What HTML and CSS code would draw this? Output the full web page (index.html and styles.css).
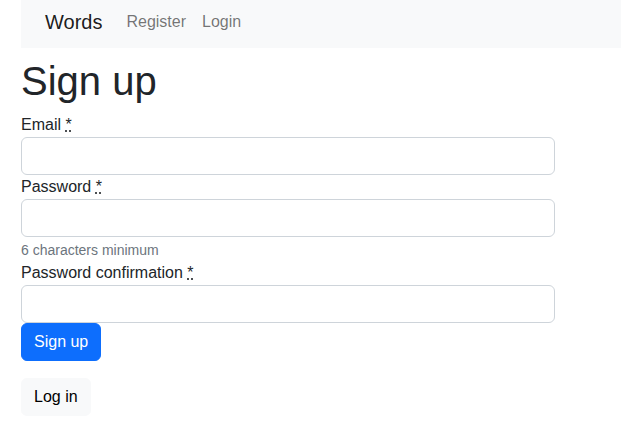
FILE: index.html
```html
<!DOCTYPE html>
<html lang="en">
<head>
<meta charset="utf-8">
<title>Words</title>
<link rel="stylesheet" href="styles.css">
</head>
<body>
<div class="page">
  <nav class="navbar">
    <a class="brand" href="#">Words</a>
    <a class="nav-link" href="#">Register</a>
    <a class="nav-link" href="#">Login</a>
  </nav>
  <h1 class="title">Sign up</h1>
  <form class="form">
    <div class="field">
      <label class="label">Email <abbr class="req" title="required">*</abbr></label>
      <input class="input" type="email">
    </div>
    <div class="field">
      <label class="label">Password <abbr class="req" title="required">*</abbr></label>
      <input class="input" type="password">
      <div class="hint">6 characters minimum</div>
    </div>
    <div class="field">
      <label class="label">Password confirmation <abbr class="req" title="required">*</abbr></label>
      <input class="input" type="password">
    </div>
    <div class="actions">
      <button class="btn btn-primary" type="button">Sign up</button>
    </div>
  </form>
  <div class="links">
    <a class="btn btn-light" href="#">Log in</a>
  </div>
</div>
</body>
</html>
```

FILE: styles.css
```css
* { box-sizing: border-box; }
html, body { margin: 0; padding: 0; }
body {
  font-family: "Liberation Sans", Arial, sans-serif;
  font-size: 16px;
  line-height: 1.5;
  color: #212529;
  background: #fff;
  overflow: hidden;
}
.page {
  padding-left: 21px;
}
.navbar {
  height: 48px;
  background: #f8f9fa;
  display: flex;
  align-items: center;
  padding-left: 24px;
  padding-bottom: 4px;
}
.brand {
  font-size: 20px;
  color: rgba(0,0,0,.9);
  text-decoration: none;
  margin-right: 24px;
  line-height: 30px;
}
.nav-link {
  color: rgba(0,0,0,.55);
  text-decoration: none;
  margin-right: 16px;
  line-height: 24px;
}
.title {
  font-size: 40px;
  font-weight: 500;
  line-height: 1.2;
  margin: 9px 0 8px;
}
.form {
  width: 534px;
}
.label {
  display: block;
}
.req {
  text-decoration: underline dotted;
  cursor: help;
  border: 0;
}
.input {
  display: block;
  width: 100%;
  height: 38px;
  padding: 6px 12px;
  font: inherit;
  border: 1px solid #ced4da;
  border-radius: 6px;
  background: #fff;
}
.hint {
  margin-top: 3px;
  font-size: 14px;
  line-height: 21px;
  color: #6c757d;
}
.btn {
  display: inline-block;
  font: inherit;
  line-height: 24px;
  padding: 6px 12px;
  border: 1px solid transparent;
  border-radius: 6px;
  text-decoration: none;
}
.btn-primary {
  background: #0d6efd;
  border-color: #0d6efd;
  color: #fff;
}
.btn-light {
  background: #f8f9fa;
  border-color: #f8f9fa;
  color: #000;
}
.links {
  margin-top: 17px;
}
```
